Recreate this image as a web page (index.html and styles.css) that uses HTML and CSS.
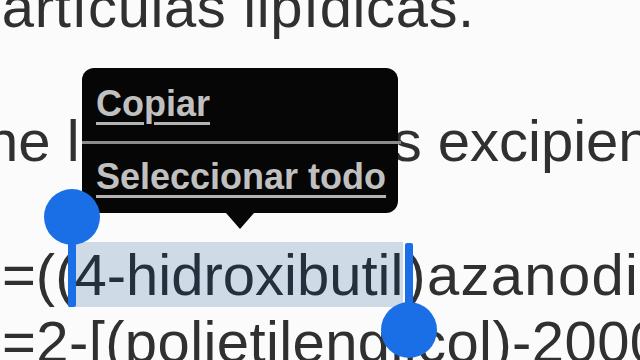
FILE: index.html
```html
<!DOCTYPE html>
<html lang="es">
<head>
<meta charset="utf-8">
<title>Selección de texto</title>
<link rel="stylesheet" href="styles.css">
</head>
<body>
<div class="page">
  <div class="doc">
    <p class="para first">partículas lipídicas.</p>
    <p class="para second">ne l<span class="covered">os siguiente</span>s excipientes:</p>
    <p class="line">=((<span class="sel">4-hidroxibutil</span><span class="after">)azanodiil)bis(hexano-6,1-diil)</span></p>
    <p class="line last">=2-[(polietilenglicol)-2000]-N,N-ditetradecilacetamida</p>
  </div>

  <div class="menu">
    <div class="menu-item"><span class="menu-label">Copiar</span></div>
    <div class="menu-divider"></div>
    <div class="menu-item"><span class="menu-label">Seleccionar todo</span></div>
  </div>

  <div class="handle-bar handle-bar-start"></div>
  <div class="handle-dot handle-dot-start"></div>
  <div class="handle-bar handle-bar-end"></div>
  <div class="handle-dot handle-dot-end"></div>
</div>
</body>
</html>
```

FILE: styles.css
```css
html, body {
  margin: 0;
  padding: 0;
}

body {
  background: #fbfbfb;
  width: 640px;
  height: 360px;
  overflow: hidden;
}

.page {
  position: relative;
  width: 640px;
  height: 360px;
  overflow: hidden;
}

.doc {
  margin-top: -27px;
  font-family: "Liberation Sans", Arial, Helvetica, sans-serif;
  font-size: 58px;
  line-height: 67px;
  color: #303030;
  white-space: nowrap;
}

.doc p {
  margin: 0;
}

.para {
  margin-bottom: 67px !important;
}

.first {
  margin-left: -31px !important;
  letter-spacing: 0.6px;
}

.second {
  margin-left: -14px !important;
}

.covered {
  letter-spacing: 0.3px;
}

.line {
  margin-left: 2px !important;
}

.last {
  letter-spacing: 0.4px;
}

.after {
  letter-spacing: 1.3px;
  margin-left: 3px;
}

.sel {
  background: #cfdae7;
  color: #24303d;
}

/* context menu */
.menu {
  position: absolute;
  left: 82px;
  top: 68px;
  width: 316px;
  height: 145px;
  box-sizing: border-box;
  padding: 16px 0 15px 0;
  background: #060606;
  border-radius: 12px;
  display: flex;
  flex-direction: column;
  font-family: "Liberation Sans", Arial, Helvetica, sans-serif;
  font-weight: 700;
  font-size: 36px;
  line-height: 40px;
  color: #c0c0c0;
  z-index: 2;
}

.menu::after {
  content: "";
  position: absolute;
  left: 144px;
  top: 100%;
  width: 0;
  height: 0;
  border-left: 14px solid transparent;
  border-right: 14px solid transparent;
  border-top: 16px solid #060606;
}

.menu-item {
  padding-left: 14px;
  height: 40px;
  white-space: nowrap;
}

.menu-label {
  text-decoration: underline;
  text-decoration-thickness: 3px;
  text-underline-offset: 6px;
  text-decoration-color: #b4b4b4;
}

.menu-divider {
  height: 3px;
  background: #8c8c8c;
  margin: 17px -3px 13px 0;
}

/* selection handles */
.handle-bar {
  position: absolute;
  width: 8px;
  background: #1b6fe6;
  border-radius: 2px;
  z-index: 3;
}

.handle-dot {
  position: absolute;
  width: 56px;
  height: 56px;
  border-radius: 50%;
  background: #1b6fe6;
  z-index: 3;
}

.handle-bar-start {
  left: 68px;
  top: 217px;
  height: 90px;
}

.handle-dot-start {
  left: 44px;
  top: 189px;
}

.handle-bar-end {
  left: 405px;
  top: 243px;
  height: 87px;
}

.handle-dot-end {
  left: 381px;
  top: 302px;
}
```
